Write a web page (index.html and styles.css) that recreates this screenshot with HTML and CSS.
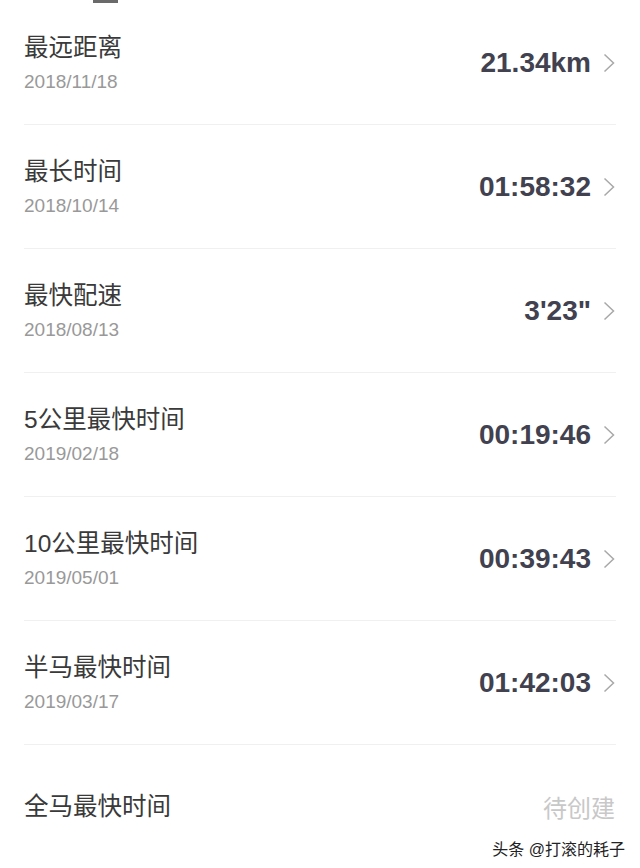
FILE: index.html
```html
<!DOCTYPE html>
<html lang="zh-CN">
<head>
  <meta charset="UTF-8" />
  <meta name="viewport" content="width=device-width, initial-scale=1.0"/>
  <title>个人记录</title>
  <link rel="stylesheet" href="styles.css">
</head>
<body>

  <!-- bit of the previous block peeking in at the top -->
  <div class="peek"><span></span></div>

  <ul class="records">
    <li class="record">
      <div class="info">
        <div class="name">最远距离</div>
        <div class="date">2018/11/18</div>
      </div>
      <div class="value">21.34km</div>
      <svg class="arrow" width="12" height="20" viewBox="0 0 12 20"><path d="M1.5 1.5 L10.5 10 L1.5 18.5" /></svg>
    </li>
    <li class="record">
      <div class="info">
        <div class="name">最长时间</div>
        <div class="date">2018/10/14</div>
      </div>
      <div class="value">01:58:32</div>
      <svg class="arrow" width="12" height="20" viewBox="0 0 12 20"><path d="M1.5 1.5 L10.5 10 L1.5 18.5" /></svg>
    </li>
    <li class="record">
      <div class="info">
        <div class="name">最快配速</div>
        <div class="date">2018/08/13</div>
      </div>
      <div class="value">3'23"</div>
      <svg class="arrow" width="12" height="20" viewBox="0 0 12 20"><path d="M1.5 1.5 L10.5 10 L1.5 18.5" /></svg>
    </li>
    <li class="record">
      <div class="info">
        <div class="name">5公里最快时间</div>
        <div class="date">2019/02/18</div>
      </div>
      <div class="value">00:19:46</div>
      <svg class="arrow" width="12" height="20" viewBox="0 0 12 20"><path d="M1.5 1.5 L10.5 10 L1.5 18.5" /></svg>
    </li>
    <li class="record">
      <div class="info">
        <div class="name">10公里最快时间</div>
        <div class="date">2019/05/01</div>
      </div>
      <div class="value">00:39:43</div>
      <svg class="arrow" width="12" height="20" viewBox="0 0 12 20"><path d="M1.5 1.5 L10.5 10 L1.5 18.5" /></svg>
    </li>
    <li class="record">
      <div class="info">
        <div class="name">半马最快时间</div>
        <div class="date">2019/03/17</div>
      </div>
      <div class="value">01:42:03</div>
      <svg class="arrow" width="12" height="20" viewBox="0 0 12 20"><path d="M1.5 1.5 L10.5 10 L1.5 18.5" /></svg>
    </li>
    <li class="record empty">
      <div class="info">
        <div class="name">全马最快时间</div>
      </div>
      <div class="pending">待创建</div>
      <div class="watermark">头条 @打滚的耗子</div>
    </li>
  </ul>

</body>
</html>
```

FILE: styles.css
```css
body {
  font-family: "Liberation Sans", "Noto Sans CJK SC", sans-serif;
  margin: 0;
  padding: 0;
  background-color: #fff;
  color: #333;
}

.peek {
  height: 1px;
}

.peek span {
  display: block;
  width: 25px;
  height: 3px;
  margin-left: 93px;
  background-color: #6a6a6a;
}

.records {
  list-style-type: none;
  margin: 0 24px;
  padding: 0;
}

.record {
  position: relative;
  display: flex;
  align-items: center;
  height: 123px;
  border-bottom: 1px solid #f0f0f0;
}

.info {
  flex: 1;
  padding-top: 2px;
}

.name {
  font-size: 24.5px;
  line-height: 30px;
  color: #3a3a3a;
}

.date {
  margin-top: 7px;
  font-size: 19px;
  line-height: 24px;
  color: #999;
}

.empty .info {
  padding-top: 0;
}

.value {
  font-size: 28px;
  font-weight: bold;
  color: #41414f;
}

.arrow {
  margin-left: 12px;
  margin-right: 1px;
}

.arrow path {
  fill: none;
  stroke: #a8a8a8;
  stroke-width: 1.5;
}

.pending {
  margin-right: 1px;
  font-size: 24px;
  color: #c8c8c8;
}

.watermark {
  position: absolute;
  right: -9px;
  bottom: 8px;
  font-size: 16px;
  color: #222;
  text-shadow: 0 0 2px #fff, 0 0 2px #fff;
}
```
